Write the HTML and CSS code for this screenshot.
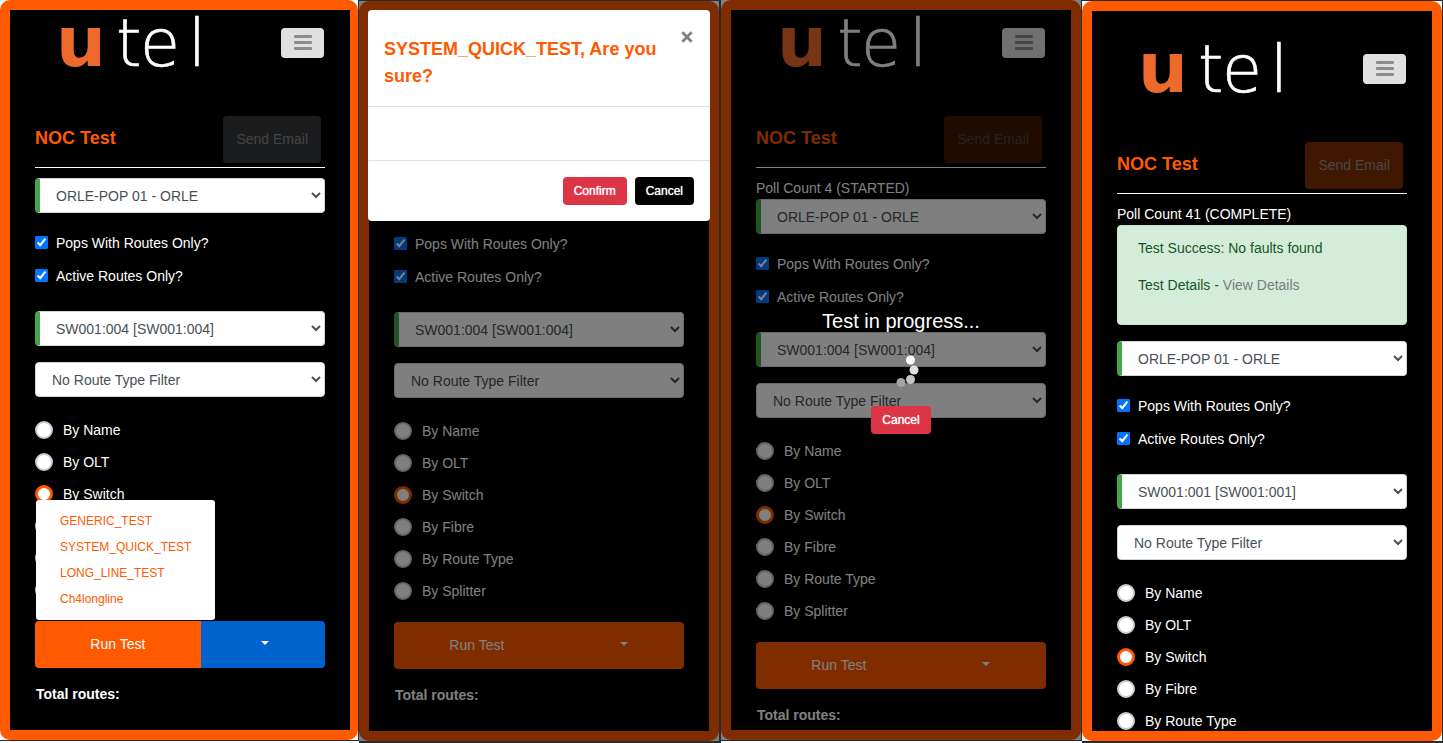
FILE: index.html
```html
<!DOCTYPE html>
<html lang="en">
<head>
<meta charset="utf-8">
<title>utel NOC Test</title>
<link rel="stylesheet" href="styles.css">
</head>
<body>
<main class="board">

  <section class="cell cell-first">
    <div class="phone">
      <header class="nav">
        <svg class="logo" viewBox="0 0 142 50" role="img" aria-label="utel"><text class="logo-u" x="-4" y="48">u</text><text class="logo-tel" x="56 80 128" y="48">tel</text></svg>
        <button class="menu-btn" type="button" aria-label="Menu"><span></span><span></span><span></span></button>
      </header>
      <div class="title-row"><h1>NOC Test</h1><button class="send send-dark" type="button" disabled>Send Email</button></div>
      <form class="form">
        <select class="select valid" aria-label="Pop"><option>ORLE-POP 01 - ORLE</option></select>
        <div class="checks">
          <label class="check"><input type="checkbox" checked>Pops With Routes Only?</label>
          <label class="check"><input type="checkbox" checked>Active Routes Only?</label>
        </div>
        <select class="select valid" aria-label="Route"><option>SW001:004 [SW001:004]</option></select>
        <select class="select filter" aria-label="Route type filter"><option>No Route Type Filter</option></select>
        <div class="radios">
          <label class="radio"><input type="radio" name="by1">By Name</label>
          <label class="radio"><input type="radio" name="by1">By OLT</label>
          <label class="radio"><input type="radio" name="by1" checked>By Switch</label>
          <label class="radio"><input type="radio" name="by1" aria-label="By Fibre"></label>
          <label class="radio"><input type="radio" name="by1" aria-label="By Route Type"></label>
          <label class="radio"><input type="radio" name="by1" aria-label="By Splitter"></label>
        </div>
        <div class="run-group">
          <button class="run" type="button">Run Test</button>
          <button class="run-toggle open" type="button" aria-label="Choose test"><span class="caret"></span></button>
          <div class="dropdown">
            <a href="#">GENERIC_TEST</a>
            <a href="#">SYSTEM_QUICK_TEST</a>
            <a href="#">LONG_LINE_TEST</a>
            <a href="#">Ch4longline</a>
          </div>
        </div>
        <p class="total">Total routes:</p>
      </form>
    </div>
  </section>

  <section class="cell cell-lower cell-wide">
    <div class="phone">
      <header class="nav covered">
        <svg class="logo" viewBox="0 0 142 50" role="img" aria-label="utel"></svg>
        <button class="menu-btn" type="button" aria-label="Menu"><span></span><span></span><span></span></button>
      </header>
      <div class="title-row covered"><h1>NOC Test</h1><button class="send" type="button" disabled>Send Email</button></div>
      <form class="form">
        <select class="select valid covered" aria-label="Pop"><option>ORLE-POP 01 - ORLE</option></select>
        <div class="checks">
          <label class="check"><input type="checkbox" checked>Pops With Routes Only?</label>
          <label class="check"><input type="checkbox" checked>Active Routes Only?</label>
        </div>
        <select class="select valid" aria-label="Route"><option>SW001:004 [SW001:004]</option></select>
        <select class="select filter" aria-label="Route type filter"><option>No Route Type Filter</option></select>
        <div class="radios">
          <label class="radio"><input type="radio" name="by2">By Name</label>
          <label class="radio"><input type="radio" name="by2">By OLT</label>
          <label class="radio"><input type="radio" name="by2" checked>By Switch</label>
          <label class="radio"><input type="radio" name="by2">By Fibre</label>
          <label class="radio"><input type="radio" name="by2">By Route Type</label>
          <label class="radio"><input type="radio" name="by2">By Splitter</label>
        </div>
        <div class="run-group">
          <button class="run" type="button">Run Test</button>
          <button class="run-toggle" type="button" aria-label="Choose test"><span class="caret"></span></button>
        </div>
        <p class="total">Total routes:</p>
      </form>
    </div>
    <div class="backdrop"></div>
    <div class="modal" role="dialog" aria-labelledby="modal-title">
      <div class="modal-head">
        <h2 id="modal-title">SYSTEM_QUICK_TEST, Are you sure?</h2>
        <button class="close" type="button" aria-label="Close"><svg viewBox="0 0 12 12"><path d="M2 2l8 8M10 2l-8 8"/></svg></button>
      </div>
      <div class="modal-body"></div>
      <div class="modal-foot">
        <button class="btn btn-danger" type="button">Confirm</button>
        <button class="btn btn-black" type="button">Cancel</button>
      </div>
    </div>
  </section>

  <section class="cell">
    <div class="phone">
      <header class="nav">
        <svg class="logo" viewBox="0 0 142 50" role="img" aria-label="utel"><text class="logo-u" x="-4" y="48">u</text><text class="logo-tel" x="56 80 128" y="48">tel</text></svg>
        <button class="menu-btn" type="button" aria-label="Menu"><span></span><span></span><span></span></button>
      </header>
      <div class="title-row"><h1>NOC Test</h1><button class="send" type="button" disabled>Send Email</button></div>
      <p class="poll">Poll Count 4 (STARTED)</p>
      <form class="form">
        <select class="select valid" aria-label="Pop"><option>ORLE-POP 01 - ORLE</option></select>
        <div class="checks">
          <label class="check"><input type="checkbox" checked>Pops With Routes Only?</label>
          <label class="check"><input type="checkbox" checked>Active Routes Only?</label>
        </div>
        <select class="select valid" aria-label="Route"><option>SW001:004 [SW001:004]</option></select>
        <select class="select filter" aria-label="Route type filter"><option>No Route Type Filter</option></select>
        <div class="radios">
          <label class="radio"><input type="radio" name="by3">By Name</label>
          <label class="radio"><input type="radio" name="by3">By OLT</label>
          <label class="radio"><input type="radio" name="by3" checked>By Switch</label>
          <label class="radio"><input type="radio" name="by3">By Fibre</label>
          <label class="radio"><input type="radio" name="by3">By Route Type</label>
          <label class="radio"><input type="radio" name="by3">By Splitter</label>
        </div>
        <div class="run-group">
          <button class="run" type="button">Run Test</button>
          <button class="run-toggle" type="button" aria-label="Choose test"><span class="caret"></span></button>
        </div>
        <p class="total">Total routes:</p>
      </form>
    </div>
    <div class="backdrop"></div>
    <div class="progress">
      <p>Test in progress...</p>
      <svg class="spinner" viewBox="0 0 60 60" aria-hidden="true">
        <circle cx="39.5" cy="20" r="4.5" fill="#fff"/>
        <circle cx="43" cy="30" r="4.5" fill="#e2e2e2"/>
        <circle cx="39.5" cy="39.5" r="4.5" fill="#c6c6c6"/>
        <circle cx="30" cy="42.5" r="4.5" fill="#a3a3a3"/>
      </svg>
      <button class="btn btn-danger" type="button">Cancel</button>
    </div>
  </section>

  <section class="cell cell-lower">
    <div class="phone">
      <header class="nav nav-tall">
        <svg class="logo" viewBox="0 0 142 50" role="img" aria-label="utel"><text class="logo-u" x="-4" y="48">u</text><text class="logo-tel" x="56 80 128" y="48">tel</text></svg>
        <button class="menu-btn" type="button" aria-label="Menu"><span></span><span></span><span></span></button>
      </header>
      <div class="title-row"><h1>NOC Test</h1><button class="send" type="button" disabled>Send Email</button></div>
      <p class="poll">Poll Count 41 (COMPLETE)</p>
      <div class="alert">
        <p>Test Success: No faults found</p>
        <p>Test Details - <a href="#">View Details</a></p>
      </div>
      <form class="form">
        <select class="select valid" aria-label="Pop"><option>ORLE-POP 01 - ORLE</option></select>
        <div class="checks">
          <label class="check"><input type="checkbox" checked>Pops With Routes Only?</label>
          <label class="check"><input type="checkbox" checked>Active Routes Only?</label>
        </div>
        <select class="select valid" aria-label="Route"><option>SW001:001 [SW001:001]</option></select>
        <select class="select filter" aria-label="Route type filter"><option>No Route Type Filter</option></select>
        <div class="radios">
          <label class="radio"><input type="radio" name="by4">By Name</label>
          <label class="radio"><input type="radio" name="by4">By OLT</label>
          <label class="radio"><input type="radio" name="by4" checked>By Switch</label>
          <label class="radio"><input type="radio" name="by4">By Fibre</label>
          <label class="radio"><input type="radio" name="by4">By Route Type</label>
        </div>
      </form>
    </div>
  </section>

</main>
</body>
</html>
```
FILE: styles.css
```css
:root {
  --orange: #ff5a00;
  --line: #2b2b2f;
  --danger: #dc3545;
}

* { box-sizing: border-box; }

body {
  margin: 0;
  background: #fff;
  color: #fff;
  font: 14px/21px "Liberation Sans", Arial, sans-serif;
}

h1, h2, p { margin: 0; }
button, select, input { font: inherit; margin: 0; }
button { cursor: pointer; }
a { text-decoration: none; }

.board {
  display: grid;
  grid-template-columns: 359fr 362fr 361fr 361fr;
  height: 100vh;
}

/* Each cell frames one phone screen with a thin dark line. */
.cell {
  position: relative;
  display: flex;
  min-width: 0;
  margin-bottom: 2px;
  overflow: hidden;
  border-right: 1px solid var(--line);
  border-bottom: 1px solid var(--line);
}
.cell-lower {
  margin-bottom: 0;
  border-top: 1px solid var(--line);
  border-bottom-width: 2px;
}
.cell-wide { border-right-width: 2px; }

.phone {
  flex: 1;
  min-width: 0;
  overflow: hidden;
  padding: 0 25px;
  background: #000;
  border: 10px solid var(--orange);
  border-radius: 10px;
}
.cell-first .phone { border-right-width: 8px; }

/* Page parts that lie fully behind the dialog */
.covered { visibility: hidden; }

/* Header */
.nav {
  display: flex;
  align-items: center;
  justify-content: space-between;
  padding: 8px 1px 8px 25px;
}
.nav-tall { padding-top: 33px; }
.logo { display: block; width: 142px; height: 50px; overflow: visible; }
.logo-u { font: 700 70px "DejaVu Sans", sans-serif; fill: #ee6a2c; }
.logo-tel {
  font: 200 65px "DejaVu Sans Light", "DejaVu Sans", sans-serif;
  fill: #fff;
  stroke: #fff;
  stroke-width: 0.6;
}

.menu-btn {
  display: flex;
  flex-direction: column;
  align-items: center;
  justify-content: center;
  gap: 3px;
  width: 43px;
  height: 30px;
  padding: 0 0 1px;
  background: #e0e0e0;
  border: 0;
  border-radius: 4px;
}
.menu-btn span {
  width: 18px;
  height: 3px;
  background: #8c8c8c;
  border-radius: 1px;
}

.title-row {
  display: flex;
  align-items: center;
  justify-content: space-between;
  margin: 40px 0 10px;
  padding: 0 4px 4px 0;
  border-bottom: 1px solid #fff;
}
h1, h2 {
  color: var(--orange);
  font-size: 18px;
  line-height: 27px;
}
h1 { padding-bottom: 2px; }
.send {
  padding: 13px;
  background: #401700;
  color: #484848;
  border: 0;
  border-radius: 4px;
}
.send-dark { background: #1b1c1e; color: #444; }

.alert {
  margin-bottom: 16px;
  padding: 12px 20px;
  background: #d4edda;
  border: 1px solid #c3e6cb;
  border-radius: 4px;
  color: #155724;
}
.alert p { margin-bottom: 16px; }
.alert a { color: #7b7b83; }

/* Form */
.select {
  display: block;
  width: 100%;
  height: 35px;
  padding: 7px 13px 6px 12px;
  background-color: #fff;
  color: #495057;
  border: 1px solid #ced4da;
  border-radius: 4px;
}
.select.valid { border-left: 5px solid #43a648; }
.select.filter { margin-top: 16px; }

.checks {
  display: grid;
  gap: 12px;
  margin: 20px 0 24px;
}
.check { display: flex; align-items: center; gap: 8px; }
.check input { width: 13px; height: 13px; margin-bottom: 3px; }

.radios {
  display: grid;
  gap: 12px;
  margin: 23px 0 21px;
}
.radio {
  display: flex;
  align-items: center;
  gap: 10px;
  min-height: 20px;
  line-height: 20px;
}
.radio input {
  appearance: none;
  width: 18px;
  height: 18px;
  background: #fff;
  border: 2px solid #c9ccd2;
  border-radius: 50%;
}
.radio input:checked { border-color: var(--orange); border-width: 3px; }

.run-group {
  position: relative;
  display: grid;
  grid-template-columns: 4fr 3fr;
}
.run, .run-toggle {
  padding: 13px;
  background: var(--orange);
  color: #fff;
  border: 0;
}
.run { border-radius: 4px 0 0 4px; }
.run-toggle { border-radius: 0 4px 4px 0; }
.run-toggle.open { background: #0062cc; }
.caret {
  display: inline-block;
  margin-left: 4px;
  vertical-align: 4px;
  border: 4px solid transparent;
  border-top-color: #fff;
  border-bottom: 0;
}

.dropdown {
  position: absolute;
  bottom: calc(100% + 1px);
  left: 1px;
  width: 179px;
  padding: 8px 0;
  background: #fff;
  border-radius: 3px;
}
.dropdown a {
  display: block;
  padding: 0 24px;
  color: var(--orange);
  font-size: 12px;
  line-height: 26px;
}

.total { margin-top: 16px; padding-left: 1px; font-weight: 700; }

/* Overlays */
.backdrop {
  position: absolute;
  inset: 0;
  background: rgba(0, 0, 0, 0.5);
}

.btn {
  padding: 5px 11px;
  color: #fff;
  border: 0;
  border-radius: 4px;
  font-size: 12px;
  line-height: 18px;
  text-shadow: 0 0 1px #fff;
}
.btn-danger { background: var(--danger); }
.btn-black { background: #000; }

.modal {
  position: absolute;
  top: 9px;
  left: 9px;
  right: 9px;
  background: #fff;
  border-radius: 4px;
}
.modal-head {
  display: flex;
  align-items: flex-start;
  justify-content: space-between;
  padding: 26px 16px 16px;
  border-bottom: 1px solid #dee2e6;
}
.close {
  flex: none;
  width: 14px;
  height: 14px;
  margin-top: -6px;
  padding: 0;
  background: none;
  border: 0;
}
.close svg { display: block; }
.close path { fill: none; stroke: #808080; stroke-width: 2.4; }
.modal-body { height: 53px; }
.modal-foot {
  display: flex;
  justify-content: flex-end;
  gap: 8px;
  padding: 16px;
  border-top: 1px solid #dee2e6;
}

.progress {
  position: absolute;
  top: 306px;
  left: 0;
  right: 0;
  display: flex;
  flex-direction: column;
  align-items: center;
}
.progress p { font-size: 20px; line-height: 30px; }
.spinner { width: 60px; height: 60px; margin: 4px 0 6px; }
```
